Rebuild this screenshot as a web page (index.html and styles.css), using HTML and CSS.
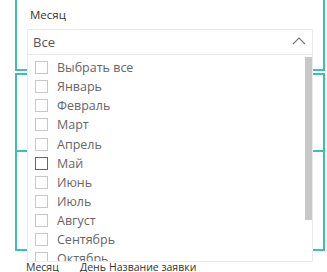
FILE: index.html
```html
<!DOCTYPE html>
<html lang="ru">
<head>
    <meta charset="UTF-8">
    <title>Месяц</title>
    <link rel="stylesheet" href="styles.css">
</head>
<body>
    <div class="page">
        <div class="visual slicer">
            <div class="slicer-title">Месяц</div>
            <div class="slicer-header">
                <span class="slicer-value">Все</span>
                <svg class="chevron" width="14" height="8" viewBox="0 0 14 8">
                    <polyline points="1,7 7,1 13,7" fill="none" stroke="#777" stroke-width="1.1"/>
                </svg>
            </div>
        </div>
        <div class="visual box-mid"></div>
        <div class="visual box-low"></div>
        <div class="table-head">
            <span class="col col-month">Месяц</span>
            <span class="col col-day">День</span>
            <span class="col">Название заявки</span>
        </div>

        <div class="popup">
            <div class="list">
                <label class="item"><span class="box"></span>Выбрать все</label>
                <label class="item"><span class="box"></span>Январь</label>
                <label class="item"><span class="box"></span>Февраль</label>
                <label class="item"><span class="box"></span>Март</label>
                <label class="item"><span class="box"></span>Апрель</label>
                <label class="item hover"><span class="box"></span>Май</label>
                <label class="item"><span class="box"></span>Июнь</label>
                <label class="item"><span class="box"></span>Июль</label>
                <label class="item"><span class="box"></span>Август</label>
                <label class="item"><span class="box"></span>Сентябрь</label>
                <label class="item"><span class="box"></span>Октябрь</label>
            </div>
            <div class="scroll-thumb"></div>
        </div>
    </div>
</body>
</html>
```

FILE: styles.css
```css
body {
    margin: 0;
    background-color: white;
    font-family: "Open Sans", "Noto Sans", sans-serif;
    overflow: hidden;
}

.page {
    position: relative;
    width: 327px;
    height: 272px;
    overflow: hidden;
}

.visual {
    margin-left: 15px;
    width: 306px;
    border: 2px solid #3cc1ae;
}

.slicer {
    border-top: none;
    height: 71px;
    padding-left: 10px;
    box-sizing: border-box;
    width: 310px;
}

.slicer-title {
    padding-top: 6px;
    padding-left: 3px;
    font-size: 11.5px;
    line-height: 17px;
    color: #333;
}

.slicer-header {
    display: flex;
    align-items: center;
    justify-content: space-between;
    margin-top: 6px;
    width: 286px;
    height: 26px;
    box-sizing: border-box;
    border: 1px solid #ebebeb;
    padding: 0 6px 0 5px;
}

.slicer-value {
    font-size: 13px;
    color: #555;
}

.chevron {
    margin-bottom: 3px;
}

.box-mid {
    margin-top: 2px;
    height: 75px;
}

.box-low {
    border-top: none;
    height: 97px;
}

.table-head {
    display: flex;
    gap: 4px;
    margin-top: 10px;
    padding-left: 26px;
    font-size: 10.5px;
    line-height: 12px;
    color: #333;
    white-space: nowrap;
}

.col-month {
    width: 50px;
}

.col-day {
    width: 25px;
}

.popup {
    position: absolute;
    left: 27px;
    top: 55px;
    width: 286px;
    height: 207px;
    box-sizing: border-box;
    background-color: white;
    border: 1px solid #ebebeb;
    border-top: none;
    overflow: hidden;
}

.list {
    padding-top: 3px;
}

.item {
    display: flex;
    align-items: center;
    gap: 9px;
    height: 19.15px;
    padding-left: 7px;
    font-size: 12.5px;
    color: #666;
}

.box {
    width: 13px;
    height: 13px;
    box-sizing: border-box;
    border: 1px solid #c8c8c8;
    flex-shrink: 0;
}

.item.hover .box {
    border-color: #666;
}

.scroll-thumb {
    position: absolute;
    left: 277px;
    top: 2px;
    width: 7px;
    height: 163px;
    background-color: #c8c8c8;
}
```
